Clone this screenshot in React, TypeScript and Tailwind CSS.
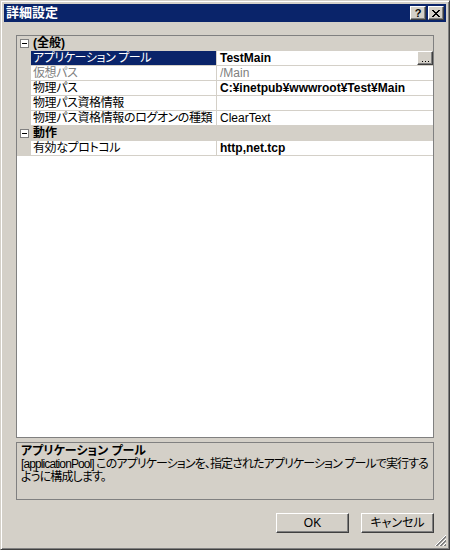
import React from 'react';

type Row =
	| { kind: 'cat'; label: string }
	| { kind: 'prop'; name: string; value: string; bold?: boolean; dim?: boolean; selected?: boolean };

const rows: Row[] = [
	{ kind: 'cat', label: '(全般)' },
	{ kind: 'prop', name: 'アプリケーション プール', value: 'TestMain', bold: true, selected: true },
	{ kind: 'prop', name: '仮想パス', value: '/Main', dim: true },
	{ kind: 'prop', name: '物理パス', value: 'C:¥inetpub¥wwwroot¥Test¥Main', bold: true },
	{ kind: 'prop', name: '物理パス資格情報', value: '' },
	{ kind: 'prop', name: '物理パス資格情報のログオンの種類', value: 'ClearText' },
	{ kind: 'cat', label: '動作' },
	{ kind: 'prop', name: '有効なプロトコル', value: 'http,net.tcp', bold: true },
];

const raised =
	'border border-t-white border-l-white border-r-[#404040] border-b-[#404040] shadow-[inset_-1px_-1px_0_#808080] bg-[#d4d0c8]';

function MinusBox() {
	return (
		<div className="w-[9px] h-[9px] border border-[#808080] bg-white flex items-center justify-center">
			<div className="w-[5px] h-px bg-black" />
		</div>
	);
}

function GridRow({ row }: { row: Row }) {
	if (row.kind === 'cat') {
		return (
			<div className="h-[15px] flex items-center bg-[#d4d0c8] border-b border-[#d4d0c8]">
				<div className="w-[14px] flex justify-center">
					<MinusBox />
				</div>
				<span className="pl-[2px] font-bold leading-[14px]">{row.label}</span>
			</div>
		);
	}
	return (
		<div className="h-[15px] flex bg-[#d4d0c8]">
			<div className="w-[14px] shrink-0" />
			<div
				className={`w-[185px] shrink-0 h-[15px] border-b border-[#d4d0c8] pl-[2px] leading-[14px] whitespace-nowrap overflow-hidden tracking-[-0.4px] ${
					row.selected ? 'bg-[#0a246a] text-white' : row.dim ? 'bg-white text-[#808080]' : 'bg-white text-black'
				}`}
			>
				{row.name}
			</div>
			<div className="w-px bg-[#d4d0c8]" />
			<div
				className={`flex-1 h-[15px] border-b border-[#d4d0c8] bg-white pl-[3px] leading-[14px] flex items-start whitespace-nowrap ${
					row.bold ? 'font-bold' : ''
				} ${row.dim ? 'text-[#808080]' : 'text-black'}`}
			>
				<span className="flex-1">{row.value}</span>
				{row.selected && (
					<div className={`${raised} w-[16px] h-[14px] flex items-end justify-center pb-[2px] gap-[2px]`}>
						<div className="w-px h-px bg-black" />
						<div className="w-px h-px bg-black" />
						<div className="w-px h-px bg-black" />
					</div>
				)}
			</div>
		</div>
	);
}

function Grip() {
	return (
		<svg width="12" height="12" viewBox="0 0 12 12">
			{[0, 4, 8].map((o) => (
				<g key={o}>
					<line x1={o + 1} y1="12" x2="12" y2={o + 1} stroke="#ffffff" strokeWidth="1" />
					<line x1={o + 2} y1="12" x2="12" y2={o + 2} stroke="#808080" strokeWidth="1" />
					<line x1={o + 3} y1="12" x2="12" y2={o + 3} stroke="#808080" strokeWidth="1" />
				</g>
			))}
		</svg>
	);
}

export default function App() {
	return (
		<div className="w-[450px] h-[550px] bg-[#d4d0c8] border border-t-[#d4d0c8] border-l-[#d4d0c8] border-r-[#404040] border-b-[#404040] shadow-[inset_1px_1px_0_#fff,inset_-1px_-1px_0_#808080] p-[3px] flex flex-col text-[12px] text-black font-['Liberation_Sans','Noto_Sans_CJK_JP',sans-serif] [font-feature-settings:'palt']">
			{/* Title bar */}
			<div className="h-[18px] bg-[#0a246a] flex items-center pl-[2px] pr-[2px]">
				<span className="flex-1 text-white font-bold text-[13px] leading-[18px]">詳細設定</span>
				<div className={`${raised} w-[16px] h-[14px] flex items-center justify-center font-bold text-[11px] leading-none`}>?</div>
				<div className={`${raised} w-[16px] h-[14px] ml-[2px] flex items-center justify-center`}>
					<svg width="8" height="7" viewBox="0 0 8 7">
						<path d="M0 0 L7 7 M1 0 L8 7 M7 0 L0 7 M8 0 L1 7" stroke="#000" strokeWidth="1" />
					</svg>
				</div>
			</div>

			{/* Body */}
			<div className="flex-1 flex flex-col px-[12px] pt-[13px]">
				<div className="h-[403px] border border-[#808080] bg-white flex flex-col">
					{rows.map((r, i) => (
						<GridRow key={i} row={r} />
					))}
				</div>

				<div className="mt-[4px] h-[58px] border border-[#808080] px-[4px] pt-[2px] leading-[13px]">
					<div className="font-bold">アプリケーション プール</div>
					<div className="whitespace-nowrap tracking-[-0.9px]">
						[applicationPool] このアプリケーションを、指定されたアプリケーション プールで実行する
					</div>
					<div className="whitespace-nowrap tracking-[-0.9px]">ように構成します。</div>
				</div>

				<div className="mt-[13px] flex justify-end gap-[12px]">
					<div className={`${raised} w-[73px] h-[20px] flex items-center justify-center`}>OK</div>
					<div className={`${raised} w-[73px] h-[20px] flex items-center justify-center`}>キャンセル</div>
				</div>

				<div className="flex-1 flex items-end justify-end -mr-[12px]">
					<Grip />
				</div>
			</div>
		</div>
	);
}
